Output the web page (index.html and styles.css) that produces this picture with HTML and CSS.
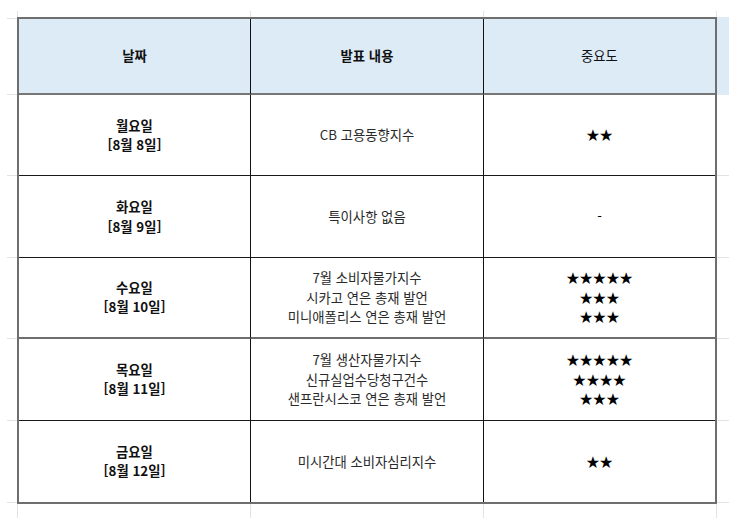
FILE: index.html
```html
<!DOCTYPE html>
<html lang="ko">
<head>
<meta charset="utf-8">
<link rel="stylesheet" href="styles.css">
</head>
<body>
<div class="sheet">
  <div class="table">
    <div class="cell head bold">날짜</div>
    <div class="cell head bold">발표 내용</div>
    <div class="cell head last">중요도</div>

    <div class="cell date">월요일<br>[8월 8일]</div>
    <div class="cell text">CB 고용동향지수</div>
    <div class="cell stars last">★★</div>

    <div class="cell date">화요일<br>[8월 9일]</div>
    <div class="cell text">특이사항 없음</div>
    <div class="cell stars last">-</div>

    <div class="cell date gray">수요일<br>[8월 10일]</div>
    <div class="cell text gray">7월 소비자물가지수<br>시카고 연은 총재 발언<br>미니애폴리스 연은 총재 발언</div>
    <div class="cell stars last gray">★★★★★<br>★★★<br>★★★</div>

    <div class="cell date">목요일<br>[8월 11일]</div>
    <div class="cell text">7월 생산자물가지수<br>신규실업수당청구건수<br>샌프란시스코 연은 총재 발언</div>
    <div class="cell stars last">★★★★★<br>★★★★<br>★★★</div>

    <div class="cell date end">금요일<br>[8월 12일]</div>
    <div class="cell text end">미시간대 소비자심리지수</div>
    <div class="cell stars last end">★★</div>
  </div>
</div>
</body>
</html>
```

FILE: styles.css
```css
html, body {
  margin: 0;
  padding: 0;
  background: #ffffff;
}

body {
  font-family: "Noto Sans CJK KR", "Noto Sans", sans-serif;
  font-size: 13.33px;
  color: #222;
}

.sheet {
  margin: 11px 0 0 7px;
  width: 722px;
  height: 507px;
  box-sizing: border-box;
  padding: 6px 0 0 10px;
  background:
    linear-gradient(#ddebf7, #ddebf7) 710px 6px / 12px 78px no-repeat,
    linear-gradient(#e2e2e2, #e2e2e2) 10px 0 / 1px 100% no-repeat,
    linear-gradient(#e2e2e2, #e2e2e2) 243px 0 / 1px 100% no-repeat,
    linear-gradient(#e2e2e2, #e2e2e2) 476px 0 / 1px 100% no-repeat,
    linear-gradient(#e2e2e2, #e2e2e2) 709px 0 / 1px 100% no-repeat,
    linear-gradient(#e2e2e2, #e2e2e2) 0 7px / 100% 1px no-repeat,
    linear-gradient(#e2e2e2, #e2e2e2) 0 83px / 100% 1px no-repeat,
    linear-gradient(#e2e2e2, #e2e2e2) 0 164px / 100% 1px no-repeat,
    linear-gradient(#e2e2e2, #e2e2e2) 0 246px / 100% 1px no-repeat,
    linear-gradient(#e2e2e2, #e2e2e2) 0 327px / 100% 1px no-repeat,
    linear-gradient(#e2e2e2, #e2e2e2) 0 409px / 100% 1px no-repeat,
    linear-gradient(#e2e2e2, #e2e2e2) 0 491px / 100% 1px no-repeat;
}

.table {
  width: 700px;
  height: 487px;
  box-sizing: border-box;
  border: 2px solid #6e6e6e;
  display: grid;
  grid-template-columns: 232px 233px 231px;
  grid-template-rows: 76px repeat(5, 1fr);
  background: #fff;
}

.cell {
  box-sizing: border-box;
  border-right: 1px solid #111;
  border-bottom: 1px solid #1a1a1a;
  display: flex;
  align-items: center;
  justify-content: center;
  text-align: center;
  line-height: 19.6px;
}

.cell.last {
  border-right: none;
}

.cell.end {
  border-bottom: none;
}

.cell.gray {
  border-bottom: 2px solid #6e6e6e;
}

.head {
  background: #ddebf7;
  border-bottom: 2px solid #777;
  color: #111;
}

.bold {
  font-weight: bold;
}

.date {
  font-weight: bold;
  color: #111;
}

.text {
  color: #2a2a2a;
}

.stars {
  color: #000;
  line-height: 19.6px;
}
```
